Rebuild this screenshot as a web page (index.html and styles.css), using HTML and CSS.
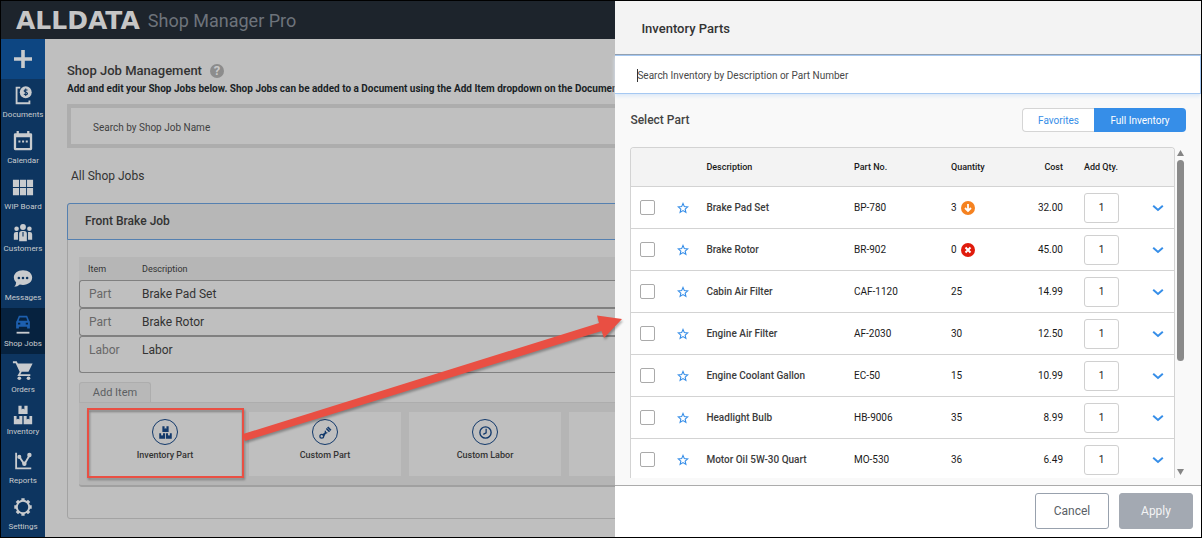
FILE: index.html
```
<!DOCTYPE html>
<html lang="en">

<head>
    <meta charset="UTF-8">
    <meta name="viewport" content="width=device-width, initial-scale=1.0">
    <title>ALLDATA Shop Manager Pro</title>
    <link rel="stylesheet" href="styles.css">
</head>

<body>
    <!-- Shared icons -->
    <svg class="sprite" aria-hidden="true">
        <symbol id="star" viewBox="0 0 24 24">
            <path d="M12 3l2.7 6.2 6.7.6-5.1 4.4 1.5 6.6L12 17.3l-5.8 3.5 1.5-6.6-5.1-4.4 6.7-.6z" fill="none" stroke="currentColor" stroke-width="2.2" />
        </symbol>
        <symbol id="chevron" viewBox="0 0 12 8">
            <path d="M1.2 1.8L6 6l4.800-4.200" fill="none" stroke="currentColor" stroke-width="2" />
        </symbol>
        <symbol id="boxes" viewBox="0 0 24 24">
            <path d="M7 2h3.500v4l1.500-1 1.500 1V2H17v9H7zM2 13h3v4l1.500-1L8 17v-4h3.300v9H2zM12.700 13H16v4l1.500-1 1.500 1v-4h3v9h-9.300z" fill="currentColor" />
        </symbol>
    </svg>

    <div class="app">
        <header class="topbar">
            <span class="logo">ALLDATA</span>
            <span class="product">Shop Manager Pro</span>
        </header>

        <div class="layout">
            <nav class="sidebar">
                <button class="add-btn" aria-label="Add">
                    <svg viewBox="0 0 20 20"><path d="M10 1v18M1 10h18" stroke="currentColor" stroke-width="3.600" /></svg>
                </button>
                <a href="#" class="nav-item">
                    <svg viewBox="0 0 24 24">
                        <path d="M9 4H5v17h14v-3" fill="none" stroke="currentColor" stroke-width="2" />
                        <circle cx="15" cy="9" r="6.500" fill="currentColor" />
                        <path d="M17 6.800c-.7-.8-3.800-1-3.800.7 0 1.800 3.800 1 3.800 2.900 0 1.700-3.200 1.500-4 .4M15 5v8" fill="none" stroke="#0d3560" stroke-width="1.100" />
                    </svg>
                    <span>Documents</span>
                </a>
                <a href="#" class="nav-item">
                    <svg viewBox="0 0 24 24">
                        <path d="M5 3.500V1h2.500v2.500h9V1H19v2.500h1.500q1.500 0 1.500 1.500v15.500q0 1.500-1.500 1.500h-17Q2 22 2 20.500V5q0-1.500 1.500-1.500zM4.500 8v11.500h15V8z" fill="currentColor" fill-rule="evenodd" />
                        <path d="M7 12.500h2.200M11 12.500h2.200M15 12.500h2.200" stroke="currentColor" stroke-width="2" />
                    </svg>
                    <span>Calendar</span>
                </a>
                <a href="#" class="nav-item">
                    <svg viewBox="0 0 24 24">
                        <path d="M1 4h6.700v8H1zM8.700 4h6.700v8H8.700zM16.400 4H23v8h-6.600zM1 13h6.700v8H1zM8.700 13h6.700v8H8.700zM16.400 13H23v8h-6.600z" fill="currentColor" />
                    </svg>
                    <span>WIP Board</span>
                </a>
                <a href="#" class="nav-item compact">
                    <svg viewBox="0 0 24 24">
                        <g fill="currentColor">
                            <circle cx="12" cy="6.500" r="3.200" />
                            <circle cx="5" cy="8.500" r="2.500" />
                            <circle cx="19" cy="8.500" r="2.500" />
                            <path d="M7.800 22v-8q0-3 3-3h2.400q3 0 3 3v8zM2 20.500v-6q0-2.500 2.500-2.500h2v8.500zM22 20.500v-6q0-2.500-2.500-2.500h-2v8.500z" />
                        </g>
                        <path d="M12 12v5" stroke="#0d3560" stroke-width="1.200" />
                    </svg>
                    <span>Customers</span>
                </a>
                <a href="#" class="nav-item">
                    <svg viewBox="0 0 24 24">
                        <path d="M12 3.500c6 0 10 3.500 10 8s-4 8-10 8q-2 0-3.500-.5Q6 21.500 2.500 21.500q2-2 2-4.500Q2 14.700 2 11.500c0-4.500 4-8 10-8z" fill="currentColor" />
                        <g fill="#0d3560"><circle cx="7.500" cy="12" r="1.400" /><circle cx="12" cy="12" r="1.400" /><circle cx="16.500" cy="12" r="1.400" /></g>
                    </svg>
                    <span>Messages</span>
                </a>
                <a href="#" class="nav-item active">
                    <svg viewBox="0 0 24 24">
                        <path d="M7.500 3h9l2 5 1 1.500V17h-3v-2h-9v2h-3V9.500l1-1.500zM8.500 5L7.300 8.500h9.400L15.500 5zM6.500 10.500v2h2.500v-2zM15 10.500v2h2.500v-2z" fill="#1d5fae" fill-rule="evenodd" />
                        <path d="M5 21.500h14" stroke="currentColor" stroke-width="2" />
                    </svg>
                    <span>Shop Jobs</span>
                </a>
                <a href="#" class="nav-item">
                    <svg viewBox="0 0 24 24">
                        <path d="M1 3.500h3.500l5 10.500-2 3.500H20" fill="none" stroke="currentColor" stroke-width="2" />
                        <path d="M5 5h17.500L18 14H9z" fill="currentColor" />
                        <circle cx="8" cy="21" r="2" fill="currentColor" /><circle cx="18" cy="21" r="2" fill="currentColor" />
                    </svg>
                    <span>Orders</span>
                </a>
                <a href="#" class="nav-item compact">
                    <svg><use href="#boxes" /></svg>
                    <span>Inventory</span>
                </a>
                <a href="#" class="nav-item">
                    <svg viewBox="0 0 24 24">
                        <path d="M4.500 3v17H21M8 7.500l5.500 8L19 6" fill="none" stroke="currentColor" stroke-width="2" />
                        <g fill="currentColor"><circle cx="8" cy="7.500" r="2.200" /><circle cx="13.500" cy="15" r="2.400" /><circle cx="19" cy="5.500" r="2.400" /></g>
                    </svg>
                    <span>Reports</span>
                </a>
                <a href="#" class="nav-item">
                    <svg viewBox="0 0 24 24">
                        <circle cx="12" cy="12" r="6.800" fill="none" stroke="currentColor" stroke-width="2.200" />
                        <path d="M12 2.500v3M12 18.500v3M2.500 12h3M18.500 12h3M5.300 5.300l2 2M16.700 16.700l2 2M5.300 18.700l2-2M16.700 7.300l2-2" stroke="currentColor" stroke-width="3.600" />
                    </svg>
                    <span>Settings</span>
                </a>
            </nav>

            <main class="content">
                <h1>Shop Job Management <button class="help" aria-label="Help">?</button></h1>
                <p class="intro">Add and edit your Shop Jobs below. Shop Jobs can be added to a Document using the Add Item dropdown on the Document</p>
                <input class="job-search" type="text" placeholder="Search by Shop Job Name" aria-label="Search by Shop Job Name">
                <h2>All Shop Jobs</h2>

                <section class="job">
                    <h3 class="job-title">Front Brake Job</h3>
                    <div class="job-body">
                        <table class="job-items">
                            <thead>
                                <tr><th>Item</th><th>Description</th></tr>
                            </thead>
                            <tbody>
                                <tr><td>Part</td><td>Brake Pad Set</td></tr>
                                <tr><td>Part</td><td>Brake Rotor</td></tr>
                                <tr class="last"><td>Labor</td><td>Labor</td></tr>
                            </tbody>
                        </table>
                        <div class="tab">Add Item</div>
                        <div class="tray">
                            <button class="card">
                                <span class="ring"><svg><use href="#boxes" /></svg></span>
                                Inventory Part
                            </button>
                            <button class="card">
                                <span class="ring">
                                    <svg viewBox="0 0 24 24">
                                        <path d="M12.500 6.500l5 5 4-4-5-5z" fill="currentColor" />
                                        <path d="M12 9l-.5 4-4.500 3M15 12l-3.500 1.500L9 18" fill="none" stroke="currentColor" stroke-width="2" />
                                        <circle cx="6" cy="18" r="3" fill="none" stroke="currentColor" stroke-width="2" />
                                        <path d="M14.500 4.500l5 5M11.500 7.500l5 5" stroke="#bfbfbf" stroke-width="1" />
                                    </svg>
                                </span>
                                Custom Part
                            </button>
                            <button class="card">
                                <span class="ring">
                                    <svg viewBox="0 0 24 24">
                                        <circle cx="12" cy="12" r="9" fill="none" stroke="currentColor" stroke-width="2.200" />
                                        <path d="M13 6v6.500L8.500 15" fill="none" stroke="currentColor" stroke-width="2" />
                                    </svg>
                                </span>
                                Custom Labor
                            </button>
                            <div class="card"></div>
                        </div>
                    </div>
                </section>
            </main>
        </div>

        <aside class="drawer">
            <h2 class="drawer-title">Inventory Parts</h2>
            <input class="part-search" type="text" placeholder="Search Inventory by Description or Part Number" aria-label="Search inventory">
            <div class="drawer-body">
                <div class="drawer-bar">
                    <h3>Select Part</h3>
                    <div class="toggle">
                        <button>Favorites</button>
                        <button class="on">Full Inventory</button>
                    </div>
                </div>
                <div class="list">
                    <div class="parts-wrap">
                        <table class="parts">
                            <colgroup>
                                <col class="c-check"><col class="c-star"><col><col class="c-no"><col class="c-qty"><col class="c-cost"><col class="c-add"><col class="c-more">
                            </colgroup>
                            <thead>
                                <tr><th></th><th></th><th>Description</th><th>Part No.</th><th>Quantity</th><th class="num">Cost</th><th>Add Qty.</th><th></th></tr>
                            </thead>
                            <tbody>
                                <tr>
                                    <td><input type="checkbox" aria-label="Select Brake Pad Set"></td>
                                    <td><button class="star" aria-label="Favorite"><svg><use href="#star" /></svg></button></td>
                                    <td class="desc">Brake Pad Set</td>
                                    <td>BP-780</td>
                                    <td><span class="stock">3 <svg class="badge" viewBox="0 0 14 14"><circle cx="7" cy="7" r="7" fill="#f58220" /><path d="M7 3v7M4 7l3 3 3-3" fill="none" stroke="#fff" stroke-width="1.800" /></svg></span></td>
                                    <td class="num">32.00</td>
                                    <td><input class="qty" type="text" value="1" aria-label="Add quantity"></td>
                                    <td><button class="more" aria-label="Details"><svg><use href="#chevron" /></svg></button></td>
                                </tr>
                                <tr>
                                    <td><input type="checkbox" aria-label="Select Brake Rotor"></td>
                                    <td><button class="star" aria-label="Favorite"><svg><use href="#star" /></svg></button></td>
                                    <td class="desc">Brake Rotor</td>
                                    <td>BR-902</td>
                                    <td><span class="stock">0 <svg class="badge" viewBox="0 0 14 14"><circle cx="7" cy="7" r="7" fill="#e01b0c" /><path d="M4.500 4.500l5 5M9.500 4.500l-5 5" stroke="#fff" stroke-width="2" /></svg></span></td>
                                    <td class="num">45.00</td>
                                    <td><input class="qty" type="text" value="1" aria-label="Add quantity"></td>
                                    <td><button class="more" aria-label="Details"><svg><use href="#chevron" /></svg></button></td>
                                </tr>
                                <tr>
                                    <td><input type="checkbox" aria-label="Select Cabin Air Filter"></td>
                                    <td><button class="star" aria-label="Favorite"><svg><use href="#star" /></svg></button></td>
                                    <td class="desc">Cabin Air Filter</td>
                                    <td>CAF-1120</td>
                                    <td>25</td>
                                    <td class="num">14.99</td>
                                    <td><input class="qty" type="text" value="1" aria-label="Add quantity"></td>
                                    <td><button class="more" aria-label="Details"><svg><use href="#chevron" /></svg></button></td>
                                </tr>
                                <tr>
                                    <td><input type="checkbox" aria-label="Select Engine Air Filter"></td>
                                    <td><button class="star" aria-label="Favorite"><svg><use href="#star" /></svg></button></td>
                                    <td class="desc">Engine Air Filter</td>
                                    <td>AF-2030</td>
                                    <td>30</td>
                                    <td class="num">12.50</td>
                                    <td><input class="qty" type="text" value="1" aria-label="Add quantity"></td>
                                    <td><button class="more" aria-label="Details"><svg><use href="#chevron" /></svg></button></td>
                                </tr>
                                <tr>
                                    <td><input type="checkbox" aria-label="Select Engine Coolant Gallon"></td>
                                    <td><button class="star" aria-label="Favorite"><svg><use href="#star" /></svg></button></td>
                                    <td class="desc">Engine Coolant Gallon</td>
                                    <td>EC-50</td>
                                    <td>15</td>
                                    <td class="num">10.99</td>
                                    <td><input class="qty" type="text" value="1" aria-label="Add quantity"></td>
                                    <td><button class="more" aria-label="Details"><svg><use href="#chevron" /></svg></button></td>
                                </tr>
                                <tr>
                                    <td><input type="checkbox" aria-label="Select Headlight Bulb"></td>
                                    <td><button class="star" aria-label="Favorite"><svg><use href="#star" /></svg></button></td>
                                    <td class="desc">Headlight Bulb</td>
                                    <td>HB-9006</td>
                                    <td>35</td>
                                    <td class="num">8.99</td>
                                    <td><input class="qty" type="text" value="1" aria-label="Add quantity"></td>
                                    <td><button class="more" aria-label="Details"><svg><use href="#chevron" /></svg></button></td>
                                </tr>
                                <tr>
                                    <td><input type="checkbox" aria-label="Select Motor Oil 5W-30 Quart"></td>
                                    <td><button class="star" aria-label="Favorite"><svg><use href="#star" /></svg></button></td>
                                    <td class="desc">Motor Oil 5W-30 Quart</td>
                                    <td>MO-530</td>
                                    <td>36</td>
                                    <td class="num">6.49</td>
                                    <td><input class="qty" type="text" value="1" aria-label="Add quantity"></td>
                                    <td><button class="more" aria-label="Details"><svg><use href="#chevron" /></svg></button></td>
                                </tr>
                            </tbody>
                        </table>
                    </div>
                    <div class="scrollbar">
                        <svg viewBox="0 0 7 6"><path d="M3.500 0L7 6H0z" fill="#858585" /></svg>
                        <div class="track"><div class="thumb"></div></div>
                        <svg viewBox="0 0 7 6"><path d="M3.500 6L7 0H0z" fill="#858585" /></svg>
                    </div>
                </div>
            </div>
            <footer class="drawer-footer">
                <button class="btn">Cancel</button>
                <button class="btn apply">Apply</button>
            </footer>
        </aside>

        <!-- Callout box and arrow -->
        <svg class="callout" aria-hidden="true">
            <rect x="87" y="408" width="155" height="68" fill="none" stroke="#e94f43" stroke-width="2" />
            <path d="M242 433L598 322 596 314.500 621 318 603 337 600.500 330 244 440z" fill="#e94f43" />
        </svg>
    </div>
</body>

</html>
```
FILE: styles.css
```
* {
    margin: 0;
    padding: 0;
    box-sizing: border-box;
}

body {
    font-family: Roboto, Arial, sans-serif;
    font-size: 11px;
    color: #333;
    background-color: #000;
}

button,
input {
    font-family: inherit;
    font-size: inherit;
    color: inherit;
}

button {
    border: none;
    background: none;
    cursor: pointer;
}

.sprite {
    display: none;
}

.app {
    position: relative;
    display: flex;
    flex-direction: column;
    height: 100vh;
    border: 1px solid #000;
    overflow: hidden;
    background-color: #bfbfbf;
}

/* Top bar */
.topbar {
    display: flex;
    align-items: center;
    gap: 8px;
    height: 38px;
    flex-shrink: 0;
    padding-left: 15px;
    background-color: #1d242c;
}

.logo {
    font-family: "DejaVu Sans", sans-serif;
    font-size: 25px;
    font-weight: bold;
    color: #c6c6c6;
}

.product {
    font-size: 18px;
    color: #6d737b;
}

.layout {
    display: flex;
    flex: 1;
    min-height: 0;
}

/* Sidebar */
.sidebar {
    display: flex;
    flex-direction: column;
    width: 44px;
    flex-shrink: 0;
    background-color: #0d3560;
    color: #c8cbce;
}

.add-btn {
    height: 40px;
    background-color: #0d4682;
}

.add-btn svg {
    display: block;
    width: 20px;
    height: 20px;
    margin: 0 auto;
}

.nav-item {
    display: flex;
    flex: 1;
    flex-direction: column;
    align-items: center;
    gap: 3px;
    padding-top: 4px;
    font-size: 8px;
    line-height: 10px;
    color: inherit;
    text-decoration: none;
    white-space: nowrap;
}

.nav-item svg {
    width: 22px;
    height: 24px;
}

.nav-item.compact {
    gap: 0;
    padding-top: 3px;
}

.nav-item.active {
    background-color: #06223f;
}

/* Main content */
.content {
    flex: 1;
    min-width: 0;
    padding: 22px 22px 0;
}

h1 {
    display: flex;
    align-items: center;
    gap: 8px;
    font-size: 13px;
    font-weight: 500;
    line-height: 20px;
}

.help {
    width: 14px;
    height: 14px;
    border-radius: 50%;
    background-color: #8c8c8c;
    color: #c8c8c8;
    font-weight: bold;
    line-height: 14px;
}

.intro {
    font-size: 10px;
    font-weight: bold;
    line-height: 16px;
    color: #1a1f26;
    white-space: nowrap;
}

.job-search {
    display: block;
    width: 100%;
    height: 44px;
    margin-top: 7px;
    padding: 2px 22px 0;
    border: 4px solid #adadad;
    background-color: #c0c0c0;
    font-size: 10px;
}

.job-search::placeholder {
    color: #404040;
    opacity: 1;
}

.content h2 {
    margin-top: 18px;
    padding-left: 4px;
    font-size: 12px;
    font-weight: normal;
    line-height: 20px;
}

.job {
    height: 316px;
    margin-top: 17px;
    border: 1px solid #a3a3a3;
    border-radius: 3px;
}

.job-title {
    height: 37px;
    margin: -1px;
    padding-left: 17px;
    border: 1px solid #5580b0;
    border-radius: 3px 3px 0 0;
    background-color: #b7b7b7;
    font-size: 12px;
    font-weight: 500;
    line-height: 35px;
}

.job-body {
    padding: 18px 11px 0;
}

.job-items {
    width: 100%;
    border-spacing: 0;
    border-collapse: separate;
}

.job-items th {
    height: 23px;
    padding-left: 9px;
    background-color: #b6b6b6;
    font-size: 9px;
    font-weight: normal;
    text-align: left;
}

.job-items th:first-child {
    width: 54px;
}

.job-items td {
    height: 28px;
    padding-left: 9px;
    border: 1px solid #808080;
    border-left: none;
    font-size: 12px;
}

.job-items td:first-child {
    border-left: 1px solid #808080;
    border-right: none;
    border-radius: 3px 0 0 3px;
    color: #686868;
}

.job-items .last td {
    height: 37px;
    padding-bottom: 9px;
}

.tab {
    width: 72px;
    height: 20px;
    margin-top: 9px;
    border: 1px solid #adadad;
    border-bottom: none;
    border-radius: 3px 3px 0 0;
    background-color: #b8b8b8;
    color: #5c5f63;
    line-height: 19px;
    text-align: center;
}

.tray {
    display: flex;
    gap: 8px;
    height: 85px;
    padding: 9px 10px;
    border-top: 1px solid #adadad;
    border-bottom: 2px solid #a0a0a0;
    border-radius: 0 0 3px 3px;
    background-color: #b5b5b5;
}

.card {
    display: flex;
    flex-direction: column;
    align-items: center;
    gap: 3px;
    width: 152px;
    height: 64px;
    padding-top: 7px;
    background-color: #bfbfbf;
    font-size: 9px;
    font-weight: 500;
    line-height: 14px;
}

.ring {
    display: flex;
    align-items: center;
    justify-content: center;
    width: 26px;
    height: 26px;
    border: 1px solid #12396b;
    border-radius: 50%;
    color: #12396b;
}

.ring svg {
    width: 15px;
    height: 15px;
}

/* Inventory drawer */
.drawer {
    position: absolute;
    top: 0;
    right: 0;
    bottom: 0;
    display: flex;
    flex-direction: column;
    width: 48.8%;
    background-color: #f9f9f9;
}

.drawer-title {
    height: 54px;
    flex-shrink: 0;
    padding: 1px 26px 0;
    border-bottom: 1px solid #8996a8;
    background-color: #f3f3f3;
    font-size: 13px;
    font-weight: 500;
    line-height: 54px;
}

.part-search {
    height: 39px;
    flex-shrink: 0;
    padding: 2px 22px 0;
    border: 1px solid #a5c8f2;
    border-left: none;
    outline: none;
    background-color: #fff;
    box-shadow: 0 2px 4px #d9e7f7;
    font-size: 10px;
}

/* Text cursor shown while the field is empty */
.part-search:placeholder-shown {
    background-image: linear-gradient(#333, #333);
    background-repeat: no-repeat;
    background-position: 22px 13px;
    background-size: 1px 13px;
}

.part-search::placeholder {
    color: #484848;
    opacity: 1;
}

.drawer-body {
    display: flex;
    flex: 1;
    flex-direction: column;
    min-height: 0;
    padding: 14px 15px 7px;
}

.drawer-bar {
    display: flex;
    align-items: center;
    justify-content: space-between;
}

.drawer-bar h3 {
    font-size: 12px;
    font-weight: 500;
    color: #444;
}

.toggle {
    display: flex;
}

.toggle button {
    width: 72px;
    height: 24px;
    border: 1px solid #d5d5d5;
    border-right: none;
    border-radius: 4px 0 0 4px;
    background-color: #fff;
    color: #368ee8;
    font-size: 10px;
}

.toggle .on {
    width: 92px;
    border: none;
    border-radius: 0 4px 4px 0;
    background-color: #368ee8;
    color: #fff;
}

.list {
    display: flex;
    flex: 1;
    gap: 2px;
    min-height: 0;
    margin-top: 15px;
    padding-right: 2px;
}

.parts-wrap {
    flex: 1;
    overflow: hidden;
    border: 1px solid #d3d3d3;
    border-bottom: none;
    border-radius: 4px 4px 0 0;
    background-color: #fff;
}

.parts {
    width: 100%;
    table-layout: fixed;
    border-spacing: 0;
    font-size: 10px;
    color: #1a1a1a;
}

.c-check {
    width: 46px;
}

.c-star {
    width: 29px;
}

.c-no {
    width: 97px;
}

.c-qty {
    width: 76px;
}

.c-cost,
.c-add {
    width: 57px;
}

.c-more {
    width: 33px;
}

.parts th {
    height: 39px;
    border-bottom: 1px solid #d3d3d3;
    background-color: #f3f3f3;
    font-size: 9px;
    font-weight: 500;
    text-align: left;
}

.parts td {
    height: 42px;
    border-bottom: 1px solid #d3d3d3;
}

.parts .num {
    padding-right: 21px;
    text-align: right;
}

.parts .desc {
    font-weight: 500;
    color: #3c3c3c;
}

.parts input[type="checkbox"] {
    appearance: none;
    display: block;
    width: 15px;
    height: 15px;
    margin-left: 9px;
    border: 1px solid #aaa;
    border-radius: 2px;
}

.star,
.more {
    display: block;
    color: #368ee8;
}

.star svg {
    display: block;
    width: 12px;
    height: 12px;
}

.more {
    margin: 0 auto;
}

.more svg {
    display: block;
    width: 12px;
    height: 8px;
}

.stock {
    display: flex;
    align-items: center;
    gap: 4px;
}

.badge {
    width: 14px;
    height: 14px;
}

.qty {
    display: block;
    width: 35px;
    height: 30px;
    border: 1px solid #d0d0d0;
    border-radius: 3px;
    text-align: center;
}

.scrollbar {
    display: flex;
    flex-direction: column;
    gap: 4px;
    width: 7px;
    padding: 3px 0;
}

.scrollbar svg {
    width: 7px;
    height: 6px;
}

.track {
    flex: 1;
}

.thumb {
    height: 66%;
    border-radius: 4px;
    background-color: #8a8a8a;
}

.drawer-footer {
    display: flex;
    justify-content: flex-end;
    gap: 10px;
    flex-shrink: 0;
    padding: 7px 8px 8px;
    border-top: 1px solid #ababab;
    background-color: #fff;
}

.btn {
    width: 74px;
    height: 36px;
    border: 1px solid #98a1ad;
    border-radius: 3px;
    background-color: #fff;
    color: #5a5f66;
    font-size: 12px;
}

.btn.apply {
    border-color: #a3a9b2;
    background-color: #a3a9b2;
    color: #f3f4f5;
}

.callout {
    position: absolute;
    top: 0;
    left: 0;
    width: 100%;
    height: 100%;
    pointer-events: none;
    filter: drop-shadow(1px 2px 1px rgba(0, 0, 0, 0.3));
}
```
